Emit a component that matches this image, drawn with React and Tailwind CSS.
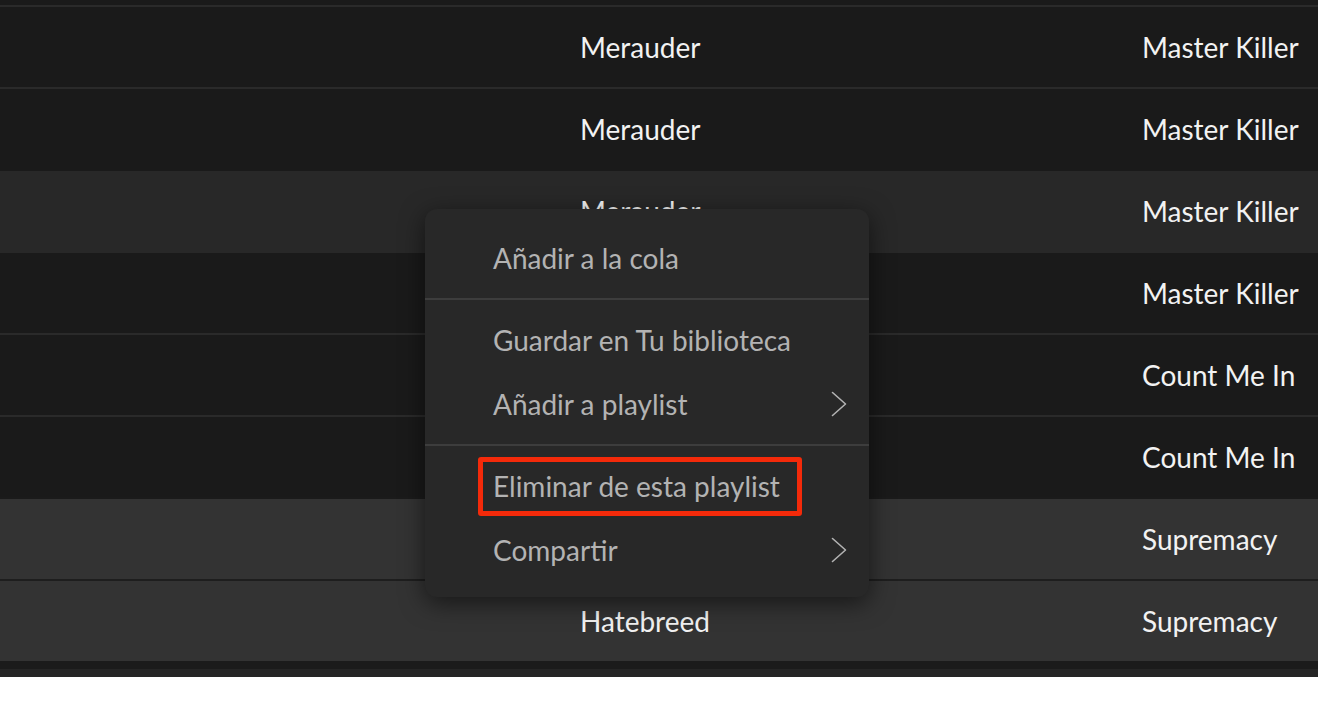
import React from "react";

const rows = [
  { artist: "Merauder", album: "Master Killer", bg: "bg-[#1a1a1a]", border: "border-[#2a2a2a]" },
  { artist: "Merauder", album: "Master Killer", bg: "bg-[#1a1a1a]", border: "border-[#2a2a2a]" },
  { artist: "Merauder", album: "Master Killer", bg: "bg-[#282828]", border: "border-[#1a1a1a]" },
  { artist: "Merauder", album: "Master Killer", bg: "bg-[#1a1a1a]", border: "border-[#282828]" },
  { artist: "Merauder", album: "Count Me In", bg: "bg-[#1a1a1a]", border: "border-[#2a2a2a]" },
  { artist: "Merauder", album: "Count Me In", bg: "bg-[#1a1a1a]", border: "border-[#2a2a2a]" },
  { artist: "Hatebreed", album: "Supremacy", bg: "bg-[#333333]", border: "border-[#1b1b1b]" },
  { artist: "Hatebreed", album: "Supremacy", bg: "bg-[#333333]", border: "border-[#1e1e1e]" },
];

function Chevron() {
  return (
    <svg width="16" height="26" viewBox="0 0 16 26" fill="none" className="shrink-0">
      <path d="M1.5 1.5 L14.5 13 L1.5 24.5" stroke="#b3b3b3" strokeWidth="1.6" strokeLinecap="round" strokeLinejoin="round" />
    </svg>
  );
}

function Item({ label, sub }) {
  return (
    <div className="h-[64px] flex items-center justify-between pl-[68px] pr-[22px] text-[#b3b3b3] text-[28px] leading-none">
      <span>{label}</span>
      {sub && <Chevron />}
    </div>
  );
}

export default function App() {
  return (
    <div className="relative w-[1318px]" style={{ fontFamily: "Lato, 'Open Sans', sans-serif" }}>
      <div className="h-[5px] bg-[#1a1a1a]" />
      {rows.map((r, i) => (
        <div
          key={i}
          className={`h-[82px] border-t-2 ${r.border} ${r.bg} grid grid-cols-[580px_562px_1fr] items-center text-[28px] leading-none text-[#f2f2f2]`}
        >
          <div />
          <div>{r.artist}</div>
          <div>{r.album}</div>
        </div>
      ))}
      <div className="h-[8px] bg-[#1b1b1b]" />
      <div className="h-[8px] bg-[#252525]" />
      <div className="h-[41px] bg-white" />

      <div className="absolute left-[425px] top-[209px] w-[444px] h-[388px] rounded-[12px] bg-[#282828] shadow-[0_6px_24px_rgba(0,0,0,0.55)] py-[17px]">
        <Item label="Añadir a la cola" />
        <div className="my-[8px] h-[2px] bg-[#3d3d3d]" />
        <Item label="Guardar en Tu biblioteca" />
        <Item label="Añadir a playlist" sub />
        <div className="my-[8px] h-[2px] bg-[#3d3d3d]" />
        <Item label="Eliminar de esta playlist" />
        <Item label="Compartir" sub />
      </div>

      <div className="absolute left-[478px] top-[457px] w-[324px] h-[59px] border-[5px] border-[#f42a0a] rounded-[3px]" />
    </div>
  );
}
